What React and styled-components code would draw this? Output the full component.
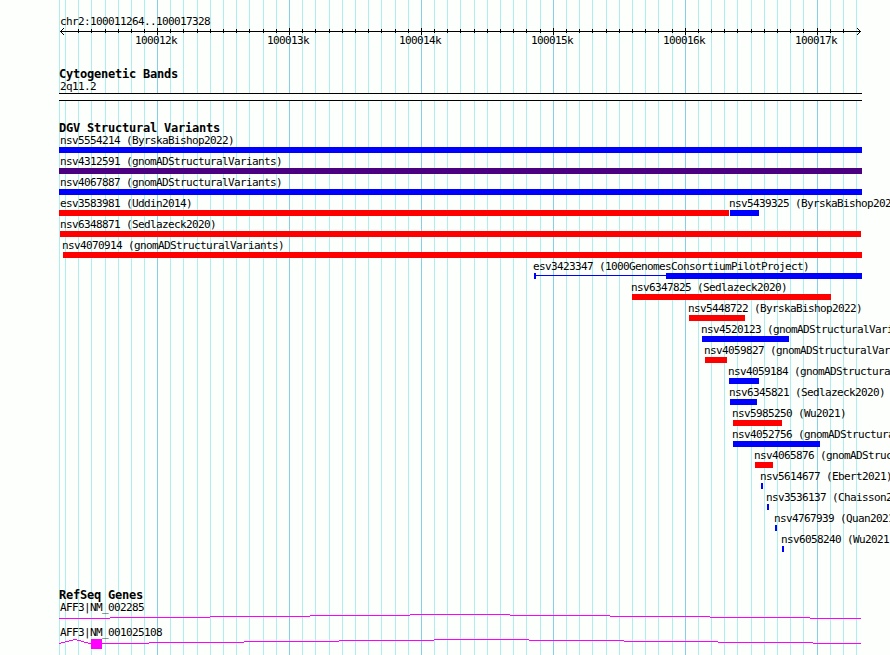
import React from "react";
import styled, { createGlobalStyle } from "styled-components";

const TRACK_LEFT = 59;

const GlobalStyle = createGlobalStyle`
  body {
    margin: 0;
    background-color: #fdfffc;
    overflow: hidden;
  }
`;

const Browser = styled.div`
  position: relative;
  box-sizing: border-box;
  width: 890px;
  height: 655px;
  padding-left: ${TRACK_LEFT}px;
  overflow: hidden;
  color: #000;
  background-color: #fdfffc;
  font-family: "DejaVu Sans Mono", "Liberation Mono", monospace;
  font-size: 11px;
  letter-spacing: -0.622px;
`;

const Drawing = styled.svg`
  display: block;
  shape-rendering: crispEdges;
`;

const GridLines = styled(Drawing)`
  position: absolute;
  top: 0;
  left: 0;
`;

const Tracks = styled.div`
  position: relative;
`;

const Label = styled.div`
  height: 11px;
  line-height: 11px;
  margin-left: ${(props) => props.$indent}px;
  white-space: pre;
`;

const Title = styled.h2`
  height: 13px;
  margin: 0;
  line-height: 12px;
  font-size: 12px;
  font-weight: bold;
  letter-spacing: -0.224px;
  white-space: pre;
`;

const RulerTrack = styled.section`
  box-sizing: border-box;
  padding-top: 16px;
  height: 68px;
`;

const RulerNumbers = styled.div`
  display: flex;
  gap: 90px;
  padding-left: 76px;

  span {
    width: 42px;
    line-height: 11px;
  }
`;

const BandTrack = styled.section`
  height: 54px;
`;

const Band = styled.div`
  box-sizing: border-box;
  width: 803px;
  height: 8px;
  margin-top: 1px;
  border-top: 1px solid #000;
  border-bottom: 1px solid #000;
  background-color: #fdfffc;
`;

const VariantTrack = styled.section`
  height: 467px;
`;

const VariantRow = styled.div`
  display: flex;
  height: 21px;
`;

const Variant = styled.div`
  flex: none;
  width: ${(props) => props.$width}px;
  margin-left: ${(props) => props.$offset}px;
`;

const Glyph = styled.div`
  display: flex;
  align-items: center;
  margin-top: 1px;
`;

const Bar = styled.div`
  width: ${(props) => props.$width}px;
  height: 6px;
  background-color: ${(props) => props.$color};
`;

const Connector = styled.div`
  flex: 1;
  height: 1px;
  margin-bottom: 1px;
  background-color: #0000ff;
`;

const minorLines = [
  59, 65, 78, 91, 105, 118, 131, 144, 170, 183, 197, 210, 223, 236, 249, 263,
  276, 302, 315, 329, 342, 355, 368, 381, 395, 408, 434, 447, 460, 474, 487,
  500, 513, 526, 540, 566, 579, 592, 606, 619, 632, 645, 658, 672, 698, 711,
  724, 737, 751, 764, 777, 790, 803, 830, 843, 856,
];
const majorLines = [157, 289, 421, 553, 685, 817];

const GAIN = "#0000ff";
const LOSS = "#ff0000";
const GAIN_LOSS = "#4b0082";

// start and end are pixels on the panel
const variantRows = [
  [{ name: "nsv5554214 (ByrskaBishop2022)", start: 59, end: 862, color: GAIN, indent: 1 }],
  [{ name: "nsv4312591 (gnomADStructuralVariants)", start: 59, end: 862, color: GAIN_LOSS, indent: 1 }],
  [{ name: "nsv4067887 (gnomADStructuralVariants)", start: 59, end: 862, color: GAIN, indent: 1 }],
  [
    { name: "esv3583981 (Uddin2014)", start: 59, end: 729, color: LOSS, indent: 1 },
    { name: "nsv5439325 (ByrskaBishop2022)", start: 730, end: 759, color: GAIN },
  ],
  [{ name: "nsv6348871 (Sedlazeck2020)", start: 60, end: 861, color: LOSS, indent: 0 }],
  [{ name: "nsv4070914 (gnomADStructuralVariants)", start: 63, end: 862, color: LOSS }],
  [{ name: "esv3423347 (1000GenomesConsortiumPilotProject)", start: 534, end: 862, color: GAIN, inner: 666 }],
  [{ name: "nsv6347825 (Sedlazeck2020)", start: 632, end: 831, color: LOSS }],
  [{ name: "nsv5448722 (ByrskaBishop2022)", start: 689, end: 745, color: LOSS }],
  [{ name: "nsv4520123 (gnomADStructuralVariants)", start: 702, end: 789, color: GAIN }],
  [{ name: "nsv4059827 (gnomADStructuralVariants)", start: 705, end: 727, color: LOSS }],
  [{ name: "nsv4059184 (gnomADStructuralVariants)", start: 729, end: 759, color: GAIN }],
  [{ name: "nsv6345821 (Sedlazeck2020)", start: 730, end: 757, color: GAIN }],
  [{ name: "nsv5985250 (Wu2021)", start: 733, end: 782, color: LOSS }],
  [{ name: "nsv4052756 (gnomADStructuralVariants)", start: 733, end: 820, color: GAIN }],
  [{ name: "nsv4065876 (gnomADStructuralVariants)", start: 755, end: 773, color: LOSS }],
  [{ name: "nsv5614677 (Ebert2021)", start: 761, end: 763, color: GAIN }],
  [{ name: "nsv3536137 (Chaisson2019)", start: 767, end: 769, color: GAIN }],
  [{ name: "nsv4767939 (Quan2021)", start: 775, end: 777, color: GAIN }],
  [{ name: "nsv6058240 (Wu2021)", start: 782, end: 784, color: GAIN }],
];

const Grid = () => (
  <GridLines width="890" height="655">
    {minorLines.map((x) => (
      <rect key={x} x={x} width="1" height="655" fill="#afeeee" />
    ))}
    {majorLines.map((x) => (
      <rect key={x} x={x} width="1" height="655" fill="#87ceeb" />
    ))}
  </GridLines>
);

const ArrowHead = ({ tip, direction }) =>
  [-3, -2, -1, 0, 1, 2, 3].map((dy) => (
    <rect key={dy} x={tip + direction * Math.abs(dy)} y={31 + dy} width="1" height="1" />
  ));

const Ruler = () => (
  <RulerTrack>
    <Label $indent={1}>chr2:100011264..100017328</Label>
    <Drawing width="803" height="8" viewBox="59 27 803 8">
      <rect x="60" y="31" width="801" height="1" />
      {minorLines.slice(2, -1).map((x) => (
        <rect key={x} x={x} y="29" width="1" height="4" />
      ))}
      {majorLines.map((x) => (
        <rect key={x} x={x} y="28" width="1" height="7" />
      ))}
      <ArrowHead tip={60} direction={1} />
      <ArrowHead tip={860} direction={-1} />
    </Drawing>
    <RulerNumbers>
      {[12, 13, 14, 15, 16, 17].map((n) => (
        <span key={n}>{`1000${n}k`}</span>
      ))}
    </RulerNumbers>
  </RulerTrack>
);

const VariantFeature = ({ variant, from }) => {
  const { name, start, end, color, inner, indent = -1 } = variant;
  return (
    <Variant $offset={start - from} $width={end - start}>
      <Label $indent={indent}>{name}</Label>
      <Glyph>
        {inner ? (
          <>
            <Bar $width={2} $color={color} />
            <Connector />
            <Bar $width={end - inner} $color={color} />
          </>
        ) : (
          <Bar $width={end - start} $color={color} />
        )}
      </Glyph>
    </Variant>
  );
};

// a gene line is a list of [x, y] points, each held until the next one
const GeneLine = ({ points, end }) =>
  points.map(([x, y], i) => {
    const next = i + 1 < points.length ? points[i + 1][0] : end;
    return <rect key={x} x={x} y={y} width={next - x} height="1" fill="#ff00ff" />;
  });

const geneA = [
  [59, 618], [110, 617], [210, 616], [310, 615], [410, 614],
  [510, 615], [610, 616], [710, 617], [810, 618],
];
const geneB = [
  [59, 643], [61, 642], [65, 641], [69, 640], [73, 639], [77, 640],
  [81, 641], [84, 642], [88, 643], [149, 642], [244, 641], [339, 640],
  [434, 639], [529, 640], [624, 641], [718, 642], [813, 643],
];

const App = () => {
  return (
    <Browser>
      <GlobalStyle />
      <Grid />
      <Tracks>
        <Ruler />
        <BandTrack>
          <Title>Cytogenetic Bands</Title>
          <Label $indent={1}>2q11.2</Label>
          <Band />
        </BandTrack>
        <VariantTrack>
          <Title>DGV Structural Variants</Title>
          {variantRows.map((row) => (
            <VariantRow key={row[0].name}>
              {row.map((variant, i) => (
                <VariantFeature
                  key={variant.name}
                  variant={variant}
                  from={i ? row[i - 1].end : TRACK_LEFT}
                />
              ))}
            </VariantRow>
          ))}
        </VariantTrack>
        <section>
          <Title>RefSeq Genes</Title>
          <Label $indent={1}>AFF3|NM_002285</Label>
          <Drawing width="803" height="14" viewBox="59 613 803 14">
            <GeneLine points={geneA} end={861} />
          </Drawing>
          <Label $indent={1}>AFF3|NM_001025108</Label>
          <Drawing width="803" height="17" viewBox="59 638 803 17">
            <GeneLine points={geneB} end={861} />
            <rect x="91" y="639" width="11" height="10" fill="#ff00ff" />
          </Drawing>
        </section>
      </Tracks>
    </Browser>
  );
};

export default App;
